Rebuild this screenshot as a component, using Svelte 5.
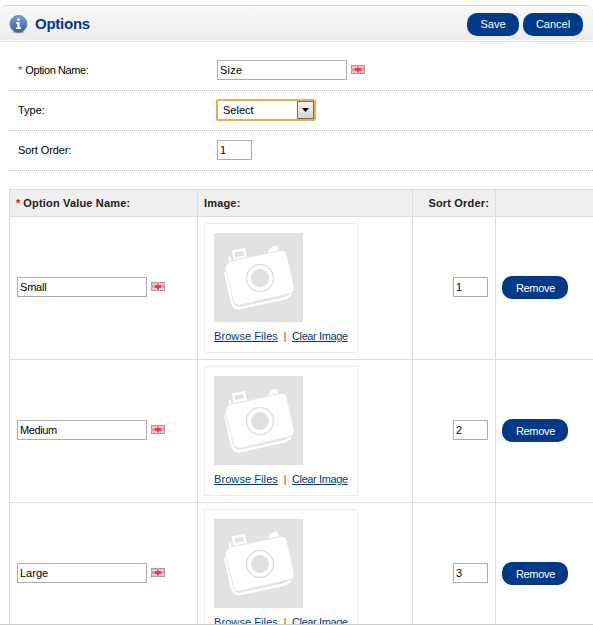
<script>
  const rows = [
    { name: 'Small', order: 1, spacing: -0.2 },
    { name: 'Medium', order: 2, spacing: -0.4 },
    { name: 'Large', order: 3, spacing: 0 }
  ];
</script>

{#snippet text(value, wide, spacing)}
  <span class="input" class:wide><span style:letter-spacing="{spacing}px">{value}</span></span>
{/snippet}

{#snippet flag()}
  <svg class="flag" width="14" height="9" viewBox="0 0 14 9">
    <rect width="14" height="9" fill="#a3abe0" />
    <path d="M0 0L14 9M14 0L0 9" stroke="#f4e4ec" stroke-width="2" />
    <path d="M0 0L14 9M14 0L0 9" stroke="#f0949e" stroke-width=".8" />
    <path d="M7 0V9M0 4.500H14" stroke="#fbd5d8" stroke-width="4" />
    <path d="M7 1V8M1 4.500H13" stroke="#f8747c" stroke-width="2" />
    <path d="M4 3H10V6H8V7H6V6H4Z" fill="#fb3a40" />
    <path d="M0 .5H14M0 8.500H14" stroke="#7f78b8" stroke-opacity=".55" />
    <path d="M.5 0V9M13.500 0V9" stroke="#6f78c8" stroke-opacity=".5" />
  </svg>
{/snippet}

{#snippet camera()}
  <svg class="camera" width="89" height="89" viewBox="0 0 89 89">
    <rect width="89" height="89" fill="#e2e2e2" />
    <path d="M15.500 23.500L16.500 29" stroke="#fff" stroke-width="2" />
    <path d="M19 18.500L30 16.500L31.500 23L20.500 25.500Z" fill="none" stroke="#fff" stroke-width="2.500" />
    <path d="M54 20Q55 16 58 14Q62 12 64 14Q65 17 63 18Z" fill="#fff" />
    <path d="M11.500 40L18 69Q20 76 26 75L70 65.500Q74 64.500 76 62" fill="none" stroke="#fff" stroke-width="2.600" stroke-linecap="round" />
    <path d="M18 28L67 17.500Q71.500 17 73 22L80 53Q81 59 76 60.500L27 72Q21 73 19.500 68L11.500 37Q11 30 18 28Z" fill="#fff" stroke="#e6e6e6" stroke-width="1" />
    <circle cx="46" cy="45" r="13.500" fill="#fff" stroke="#e0e0e0" stroke-width="1.600" />
    <circle cx="46" cy="45" r="9" fill="#e0e0e0" />
  </svg>
{/snippet}

<div class="page">
  <header>
    <svg class="info" width="19" height="19" viewBox="0 0 19 19">
      <defs>
        <linearGradient id="blue" x1="0" y1="0" x2="0" y2="1">
          <stop offset="0" stop-color="#7d9fcf" />
          <stop offset="1" stop-color="#2d5c9e" />
        </linearGradient>
      </defs>
      <ellipse cx="9.500" cy="17" rx="6.500" ry="1.500" fill="#bbb" />
      <circle cx="9.500" cy="9" r="8.500" fill="url(#blue)" stroke="#5a7fb5" stroke-width=".8" />
      <path d="M8.300 3.600H10.700V5.800H8.300ZM7 7.200H10.700V12.500H12V14H7V12.500H8.400V8.700H7Z" fill="#fff" />
    </svg>
    <h1>Options</h1>
    <div class="buttons">
      <span class="button save">Save</span>
      <span class="button cancel">Cancel</span>
    </div>
  </header>

  <section class="form">
    <div class="field">
      <div class="label"><b>*</b> <span class="option-name">Option Name:</span></div>
      <div class="value">{@render text('Size', true, 0.2)}{@render flag()}</div>
    </div>
    <div class="field">
      <div class="label">Type:</div>
      <div class="value">
        <span class="select">
          <span>Select</span>
          <span class="arrow"><svg width="7" height="4" viewBox="0 0 7 4"><path d="M0 0H7L3.500 4Z" /></svg></span>
        </span>
      </div>
    </div>
    <div class="field">
      <div class="label sort">Sort Order:</div>
      <div class="value">{@render text('1', false, 0)}</div>
    </div>
  </section>

  <section class="table">
    <div class="row head">
      <div><b>*</b>&nbsp;<span class="wider">Option Value Name:</span></div>
      <div><span class="wider">Image:</span></div>
      <div class="right"><span class="wider">Sort Order:</span></div>
      <div></div>
    </div>
    {#each rows as row}
      <div class="row">
        <div class="name">{@render text(row.name, true, row.spacing)}{@render flag()}</div>
        <div>
          <div class="image">
            {@render camera()}
            <div class="links"><u class="browse">Browse Files</u><i>|</i><u class="clear">Clear Image</u></div>
          </div>
        </div>
        <div class="right order">{@render text(row.order, false, 0)}</div>
        <div class="action"><span class="button remove">Remove</span></div>
      </div>
    {/each}
  </section>
</div>

<style>
  .page {
    box-sizing: border-box;
    width: 593px;
    height: 625px;
    padding-top: 5px;
    overflow: hidden;
    background: #fff;
    border-bottom: 1px solid #ccc;
    font: 11px/14px "Liberation Sans", Arial, sans-serif;
    color: #000;
  }
  header {
    box-sizing: border-box;
    height: 37px;
    display: flex;
    align-items: center;
    padding: 0 10px 0 8px;
    border: 1px solid #dbdbdb;
    border-width: 1px 0;
    border-radius: 7px 7px 0 0;
    background: linear-gradient(#f8f8f8, #ececec);
    box-shadow: inset 0 1px #fff, inset 0 -1px #fff;
  }
  .info { margin: 2px 7px 0 1px; }
  h1 {
    margin: 0;
    font-size: 15px;
    line-height: 18px;
    color: #003a88;
    letter-spacing: -0.25px;
  }
  .buttons { display: flex; gap: 4px; margin-left: auto; padding-top: 1px; }
  .button {
    box-sizing: border-box;
    display: flex;
    align-items: center;
    justify-content: center;
    height: 23px;
    border-radius: 10px;
    background: #003a88;
    color: #fff;
  }
  .save { width: 52px; }
  .cancel { width: 60px; }
  .remove { width: 66px; padding-left: 1px; letter-spacing: -0.3px; }
  .form { margin: 9px 0 18px 9px; }
  .field {
    box-sizing: border-box;
    height: 40px;
    display: flex;
    align-items: center;
    padding-bottom: 1px;
    border-bottom: 1px dotted #bbb;
  }
  .label { width: 199px; padding-left: 9px; }
  .option-name { letter-spacing: -0.4px; }
  .sort { letter-spacing: -0.1px; }
  .value { display: flex; align-items: center; }
  b { color: #f00; font-weight: normal; }
  .input {
    box-sizing: border-box;
    display: block;
    width: 35px;
    height: 20px;
    padding: 1px 2px;
    line-height: 16px;
    border: 1px solid #aaacb1;
    background: #fff;
    text-align: left;
  }
  .wide { width: 130px; }
  .flag { display: block; margin: 0 0 1px 4px; }
  .select {
    box-sizing: border-box;
    display: flex;
    align-items: center;
    justify-content: space-between;
    width: 100px;
    height: 22px;
    margin-left: -1px;
    padding-left: 5px;
    border: 2px solid #e3af57;
    border-radius: 2px;
  }
  .arrow {
    box-sizing: border-box;
    display: flex;
    align-items: center;
    justify-content: center;
    width: 17px;
    height: 18px;
    border: 1px solid #707070;
    background: linear-gradient(#f5f5f5, #d5d5d5);
  }
  .table { margin-left: 9px; border: 1px solid #dbdbdb; border-width: 1px 0 0 1px; }
  .row {
    box-sizing: border-box;
    height: 143px;
    display: grid;
    grid-template-columns: 188px 215px 83px 97px;
    border-bottom: 1px solid #dbdbdb;
  }
  .row > div {
    box-sizing: border-box;
    display: flex;
    align-items: center;
    padding: 0 6px;
    border-right: 1px solid #dbdbdb;
  }
  .row > div:last-child { border-right: 0; }
  .row > .name { padding: 0 0 2px 7px; }
  .row > .right { justify-content: flex-end; }
  .row > .order { padding: 0 7px 2px 0; }
  .row > .action { padding-bottom: 1px; }
  .head { height: 27px; background: #efefef; color: #222; font-weight: bold; }
  .head b { font-weight: bold; }
  .wider { letter-spacing: 0.17px; }
  .image {
    box-sizing: border-box;
    width: 154px;
    height: 130px;
    padding: 9px;
    border: 1px solid #ededed;
  }
  .camera { display: block; }
  .links { display: flex; margin-top: 7px; color: #003a7c; white-space: nowrap; }
  .links u { text-underline-offset: 1px; }
  .browse { width: 64px; letter-spacing: 0.08px; }
  .clear { letter-spacing: -0.38px; }
  i { width: 14px; text-align: center; font-style: normal; font-weight: bold; color: #d98a28; }
</style>
